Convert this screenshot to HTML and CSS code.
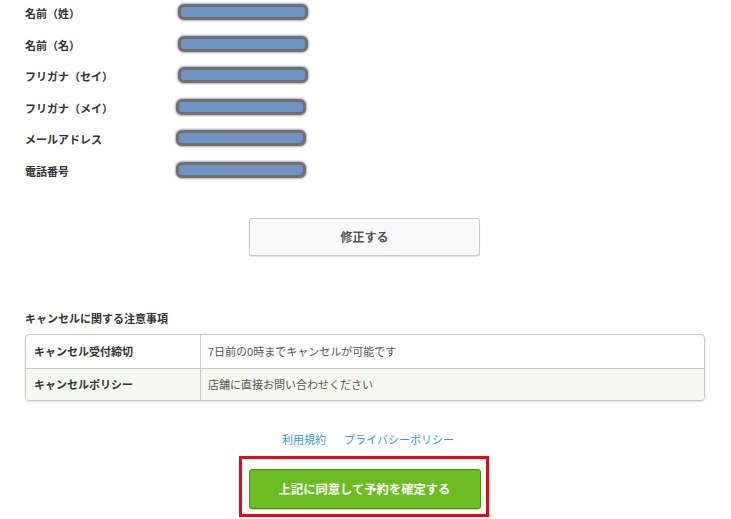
FILE: index.html
```html
<!DOCTYPE html>
<html lang="ja">
<head>
<meta charset="utf-8">
<title>予約確認</title>
<link rel="stylesheet" href="styles.css">
</head>
<body>
<div class="page">
  <div class="fields">
    <div class="field"><span class="label">名前（姓）</span><span class="mask"></span></div>
    <div class="field"><span class="label">名前（名）</span><span class="mask"></span></div>
    <div class="field"><span class="label">フリガナ（セイ）</span><span class="mask"></span></div>
    <div class="field shift"><span class="label">フリガナ（メイ）</span><span class="mask"></span></div>
    <div class="field shift"><span class="label">メールアドレス</span><span class="mask"></span></div>
    <div class="field shift"><span class="label">電話番号</span><span class="mask"></span></div>
  </div>

  <div class="edit-wrap">
    <button class="edit-btn">修正する</button>
  </div>

  <h3 class="notice-title">キャンセルに関する注意事項</h3>
  <div class="notice-table">
    <div class="trow">
      <div class="th">キャンセル受付締切</div>
      <div class="td">7日前の0時までキャンセルが可能です</div>
    </div>
    <div class="trow alt">
      <div class="th">キャンセルポリシー</div>
      <div class="td">店舗に直接お問い合わせください</div>
    </div>
  </div>

  <div class="links">
    <a href="#">利用規約</a>
    <a href="#">プライバシーポリシー</a>
  </div>

  <div class="confirm-wrap">
    <div class="confirm-box">
      <button class="confirm-btn">上記に同意して予約を確定する</button>
    </div>
  </div>
</div>
</body>
</html>
```

FILE: styles.css
```css
* { box-sizing: border-box; }
html, body { margin: 0; padding: 0; background: #fff; }
body {
  font-family: "Noto Sans CJK JP", "Noto Sans", sans-serif;
  font-size: 11px;
  color: #333;
  width: 731px;
  height: 519px;
  overflow: hidden;
}
.page { padding: 0 26px 0 25px; }

.fields {
  display: flex;
  flex-direction: column;
  gap: 5.6px;
}
.field {
  height: 26px;
  display: flex;
  align-items: center;
}
.label {
  width: 153px;
  font-weight: bold;
  font-size: 11px;
  color: #333;
}
.shift .label { width: 151px; }
.mask {
  width: 130px;
  height: 16px;
  margin-top: -2px;
  background: #6f93c4;
  border: 3.5px solid #707070;
  border-radius: 6px;
  box-shadow: 0 0 2px 1px rgba(110,110,110,0.55);
}

.edit-wrap {
  display: flex;
  justify-content: center;
  margin-top: 34px;
  padding-right: 1px;
}
.edit-btn {
  width: 231px;
  height: 38px;
  background: #f9f9f9;
  border: 1px solid #c9c9c9;
  border-radius: 3px;
  box-shadow: 0 1px 1px rgba(0,0,0,0.12);
  font-family: inherit;
  font-size: 12px;
  font-weight: bold;
  color: #555;
}

.notice-title {
  margin: 53px 0 0;
  font-size: 11px;
  font-weight: bold;
  color: #333;
  line-height: 18px;
}
.notice-table {
  margin-top: 7px;
  width: 680px;
  border: 1px solid #c8c8c8;
  border-radius: 4px;
  box-shadow: 0 1px 2px rgba(0,0,0,0.12);
  overflow: hidden;
}
.trow {
  display: flex;
  height: 33px;
}
.trow + .trow { border-top: 1px solid #c8c8c8; height: 32px; }
.trow.alt { background: #f6f9f0; }
.th {
  width: 175px;
  border-right: 1px solid #c8c8c8;
  padding-left: 8px;
  display: flex;
  align-items: center;
  font-weight: bold;
  color: #333;
}
.td {
  flex: 1;
  padding-left: 7px;
  display: flex;
  align-items: center;
  color: #555;
}

.links {
  display: flex;
  justify-content: center;
  gap: 18px;
  margin-top: 30px;
  line-height: 16px;
  padding-left: 6px;
}
.links a {
  color: #3a97d4;
  text-decoration: none;
  font-size: 11px;
}

.confirm-wrap {
  display: flex;
  justify-content: center;
  margin-top: 9px;
  padding-right: 3px;
}
.confirm-box {
  border: 3px solid #e20a17;
  padding: 10px 5px 5px 7px;
}
.confirm-btn {
  display: block;
  width: 232px;
  height: 40px;
  background: #6cbd22;
  border: 1px solid #4f8c1a;
  border-radius: 3px;
  box-shadow: 0 1px 1px rgba(0,0,0,0.2);
  font-family: inherit;
  font-size: 12.3px;
  font-weight: bold;
  color: #fff;
}
```
